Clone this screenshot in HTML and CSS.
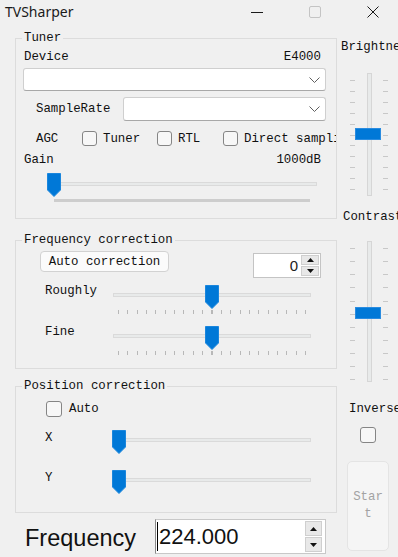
FILE: index.html
```html
<!DOCTYPE html>
<html>
<head>
  <title>TVSharper</title>
  <link rel="stylesheet" href="styles.css">
</head>
<body>
  <div class="window">
    <div class="titlebar">
      <span class="title">TVSharper</span>
      <div class="caption-buttons">
        <span class="caption-btn"><svg width="12" height="12" viewBox="0 0 12 12"><path d="M0 6.5H12" stroke="#1a1a1a" stroke-width="1"/></svg></span>
        <span class="caption-btn"><svg width="12" height="12" viewBox="0 0 12 12"><rect x="0.5" y="0.5" width="11" height="11" rx="1.5" fill="none" stroke="#c4c4c4"/></svg></span>
        <span class="caption-btn"><svg width="12" height="12" viewBox="0 0 12 12"><path d="M0.5 0.5L11.5 11.5M11.5 0.5L0.5 11.5" stroke="#1a1a1a" stroke-width="1"/></svg></span>
      </div>
    </div>

    <div class="client">
      <div class="left">
        <div class="group tuner">
          <span class="legend">Tuner</span>
          <div class="row spread first"><span>Device</span><span class="value">E4000</span></div>
          <div class="combo device"><svg class="chevron" width="11" height="6" viewBox="0 0 11 6"><path d="M0.5 0.5L5.5 5.5L10.5 0.5" fill="none" stroke="#5f5f5f"/></svg></div>
          <div class="row samplerate">
            <span class="samplerate-label">SampleRate</span>
            <div class="combo rate"><svg class="chevron" width="11" height="6" viewBox="0 0 11 6"><path d="M0.5 0.5L5.5 5.5L10.5 0.5" fill="none" stroke="#5f5f5f"/></svg></div>
          </div>
          <div class="row agc">
            <span class="agc-label">AGC</span>
            <label class="check tuner-check"><span class="box"></span>Tuner</label>
            <label class="check rtl-check"><span class="box"></span>RTL</label>
            <label class="check"><span class="box"></span>Direct sampling</label>
          </div>
          <div class="row spread gain"><span>Gain</span><span class="value">1000dB</span></div>
          <div class="hslider gain-slider">
            <div class="track"></div>
            <svg class="thumb" width="14" height="24" viewBox="0 0 14 24"><path d="M0.5 0.5H13.5V17L7 23.5L0.5 17Z" fill="#0078d7" stroke="#1a86dd"/></svg>
          </div>
          <div class="gain-bar"></div>
        </div>

        <div class="group freq">
          <span class="legend">Frequency correction</span>
          <div class="row auto-row">
            <button class="btn auto-btn">Auto correction</button>
            <div class="numeric">
              <span class="numeric-value">0</span>
              <span class="spin small">
                <span class="spin-btn"><svg width="7" height="4" viewBox="0 0 7 4"><path d="M3.5 0L7 4H0Z" fill="#111"/></svg></span>
                <span class="spin-btn"><svg width="7" height="4" viewBox="0 0 7 4"><path d="M0 0H7L3.5 4Z" fill="#111"/></svg></span>
              </span>
            </div>
          </div>
          <div class="row slider-row rough">
            <span class="slider-label">Roughly</span>
            <div class="hslider ticked">
              <div class="track"></div>
              <div class="ticks"></div>
              <svg class="thumb mid" width="14" height="24" viewBox="0 0 14 24"><path d="M0.5 0.5H13.5V17L7 23.5L0.5 17Z" fill="#0078d7" stroke="#1a86dd"/></svg>
            </div>
          </div>
          <div class="row slider-row">
            <span class="slider-label">Fine</span>
            <div class="hslider ticked">
              <div class="track"></div>
              <div class="ticks"></div>
              <svg class="thumb mid" width="14" height="24" viewBox="0 0 14 24"><path d="M0.5 0.5H13.5V17L7 23.5L0.5 17Z" fill="#0078d7" stroke="#1a86dd"/></svg>
            </div>
          </div>
        </div>

        <div class="group position">
          <span class="legend">Position correction</span>
          <label class="check auto-check"><span class="box"></span>Auto</label>
          <div class="row slider-row pos">
            <span class="slider-label pos-label">X</span>
            <div class="hslider pos-slider">
              <div class="track"></div>
              <svg class="thumb" width="14" height="24" viewBox="0 0 14 24"><path d="M0.5 0.5H13.5V17L7 23.5L0.5 17Z" fill="#0078d7" stroke="#1a86dd"/></svg>
            </div>
          </div>
          <div class="row slider-row pos">
            <span class="slider-label pos-label">Y</span>
            <div class="hslider pos-slider">
              <div class="track"></div>
              <svg class="thumb" width="14" height="24" viewBox="0 0 14 24"><path d="M0.5 0.5H13.5V17L7 23.5L0.5 17Z" fill="#0078d7" stroke="#1a86dd"/></svg>
            </div>
          </div>
        </div>

        <div class="freq-row">
          <span class="freq-label">Frequency</span>
          <div class="freq-input">
            <span class="caret"></span><span class="freq-value">224.000</span>
            <span class="spin big">
              <span class="spin-btn"><svg width="7" height="4" viewBox="0 0 7 4"><path d="M3.5 0L7 4H0Z" fill="#111"/></svg></span>
              <span class="spin-btn"><svg width="7" height="4" viewBox="0 0 7 4"><path d="M0 0H7L3.5 4Z" fill="#111"/></svg></span>
            </span>
          </div>
        </div>
      </div>

      <div class="right">
        <div class="side-label">Brightness</div>
        <div class="vslider brightness">
          <div class="vticks"></div>
          <div class="vtrack"></div>
          <div class="vticks right-ticks"></div>
          <div class="vthumb"></div>
        </div>
        <div class="side-label contrast-label">Contrast</div>
        <div class="vslider contrast">
          <div class="vticks"></div>
          <div class="vtrack"></div>
          <div class="vticks right-ticks"></div>
          <div class="vthumb"></div>
        </div>
        <div class="side-label inverse-label">Inverse</div>
        <span class="box inverse-box"></span>
        <div class="start-btn"><span class="start-text">Start</span></div>
      </div>
    </div>
  </div>
</body>
</html>
```

FILE: styles.css
```css
* {
  margin: 0;
  padding: 0;
  box-sizing: border-box;
}

body, html {
  width: 398px;
  height: 557px;
  overflow: hidden;
  background: #f0f0f0;
}

.window {
  width: 398px;
  height: 557px;
  overflow: hidden;
  font-family: 'Liberation Mono', monospace;
  font-size: 12.4px;
  line-height: 14px;
  color: #111;
}

/* title bar */
.titlebar {
  height: 30px;
  display: flex;
  align-items: center;
}

.title {
  font-family: 'Noto Sans', sans-serif;
  font-size: 14px;
  color: #1a1a1a;
  padding-left: 5px;
  margin-top: -6px;
}

.caption-buttons {
  margin-left: auto;
  margin-right: -4px;
  display: flex;
  margin-top: -6px;
}

.caption-btn {
  width: 58px;
  display: flex;
  justify-content: center;
}

/* main area */
.client {
  display: grid;
  grid-template-columns: 326px 1fr;
  padding-left: 15px;
}

.group {
  position: relative;
  width: 322px;
  border: 1px solid #dcdcdc;
  padding: 0 10px 0 7px;
}

.legend {
  position: absolute;
  top: -8px;
  left: 6px;
  padding: 0 2px 0 2px;
  background: #f0f0f0;
}

.tuner {
  margin-top: 8px;
  height: 181px;
}

.freq {
  margin-top: 21px;
  height: 129px;
}

.position {
  margin-top: 17px;
  height: 127px;
}

.row {
  display: flex;
  align-items: center;
}

.spread {
  justify-content: space-between;
  padding-left: 1px;
}

.spread .value {
  padding-right: 5px;
}

.first {
  margin-top: 11px;
}

.combo {
  position: relative;
  background: #fff;
  border: 1px solid #cfcfcf;
  border-bottom-color: #a8a8a8;
  border-radius: 3px;
}

.chevron {
  position: absolute;
  right: 5px;
  top: 8px;
}

.device {
  margin-top: 4px;
  height: 23px;
}

.samplerate {
  margin-top: 6px;
  padding-left: 13px;
}

.samplerate-label {
  width: 87px;
}

.rate {
  flex: 1;
  height: 24px;
}

.agc {
  margin-top: 10px;
  margin-right: -10px;
  padding-left: 13px;
  height: 15px;
  overflow: hidden;
  white-space: nowrap;
}

.agc-label {
  width: 46px;
  flex: none;
}

.check {
  display: flex;
  align-items: center;
  flex: none;
}

.box {
  display: inline-block;
  width: 15px;
  height: 15px;
  border: 1px solid #858585;
  border-radius: 3px;
  background: #f7f7f7;
  margin-right: 6px;
}

.tuner-check {
  width: 75px;
}

.rtl-check {
  width: 66px;
}

.gain {
  margin-top: 7px;
}

/* horizontal trackbars */
.hslider {
  position: relative;
  height: 24px;
}

.track {
  position: absolute;
  top: 8px;
  height: 4px;
  left: 0;
  right: 0;
  background: #e8eaea;
  border: 1px solid #dadada;
}

.thumb {
  position: absolute;
  top: 0;
  left: 0;
  display: block;
}

.gain-slider {
  margin-top: 6px;
  margin-left: 24px;
  width: 270px;
}

.gain-slider .track {
  left: 6px;
  top: 9px;
}

.gain-bar {
  margin-top: 2px;
  margin-left: 31px;
  width: 256px;
  height: 3px;
  background: #cdcdcd;
}

.auto-row {
  margin-top: 10px;
  align-items: flex-start;
  justify-content: space-between;
  padding-right: 5px;
}

.btn {
  font-family: 'Liberation Mono', monospace;
  font-size: 12.4px;
  color: #111;
  background: #fbfbfb;
  border: 1px solid #d2d2d2;
  border-radius: 4px;
}

.auto-btn {
  margin-left: 17px;
  width: 129px;
  height: 21px;
}

.numeric {
  margin-top: 2px;
  width: 68px;
  height: 25px;
  background: #fff;
  border: 1px solid #c4c4c4;
  display: flex;
  align-items: center;
  justify-content: flex-end;
}

.numeric-value {
  font-family: 'Liberation Sans', sans-serif;
  font-size: 15px;
  color: #222;
  margin-right: 3px;
}

.spin {
  display: flex;
  flex-direction: column;
  gap: 1px;
}

.spin-btn {
  display: flex;
  align-items: center;
  justify-content: center;
  background: #e8e8e8;
  border: 1px solid #cfcfcf;
}

.small .spin-btn {
  width: 18px;
  height: 10px;
}

.small {
  margin-right: 1px;
}

.slider-row {
  align-items: flex-start;
  padding-left: 22px;
  height: 41px;
}

.rough {
  margin-top: 7px;
}

.slider-label {
  width: 68px;
  margin-top: -1px;
  flex: none;
}

.ticked {
  width: 198px;
}

.ticks {
  position: absolute;
  top: 25px;
  left: 5px;
  width: 189px;
  height: 4px;
  background: repeating-linear-gradient(to right, #b8b8b8 0 1px, transparent 1px 9.35px);
}

.thumb.mid {
  left: 92px;
}

.auto-check {
  margin-top: 14px;
  margin-left: 23px;
}

.auto-check .box {
  width: 16px;
  height: 16px;
  margin-right: 7px;
}

.pos {
  margin-top: 13px;
  height: 27px;
}

.pos + .pos {
  margin-top: 13px;
}

.pos-label {
  width: 67px;
  margin-top: 1px;
}

.pos-slider {
  width: 199px;
}

.pos-slider .track {
  left: 6px;
}

/* frequency entry */
.freq-row {
  margin-top: 6px;
  display: flex;
  align-items: center;
  padding-left: 10px;
}

.freq-label {
  width: 130px;
  font-family: 'Liberation Sans', sans-serif;
  font-size: 23.5px;
  line-height: 30px;
  color: #111;
  margin-top: 2px;
}

.freq-input {
  width: 171px;
  height: 35px;
  background: #fff;
  border: 1px solid #c8c8c8;
  border-left-color: #8a8a8a;
  display: flex;
  align-items: center;
  padding-left: 1px;
}

.caret {
  width: 1px;
  height: 29px;
  background: #000;
  margin-right: 1px;
}

.freq-value {
  font-family: 'Liberation Sans', sans-serif;
  font-size: 22px;
  color: #111;
  flex: 1;
}

.big {
  margin-right: 3px;
}

.big .spin-btn {
  width: 17px;
  height: 15px;
}

/* right column */
.right {
  padding-top: 10px;
  white-space: nowrap;
  display: flex;
  flex-direction: column;
  align-items: flex-start;
}

.vslider {
  position: relative;
  margin-top: 19px;
  margin-left: 7px;
  width: 42px;
  height: 123px;
}

.vtrack {
  position: absolute;
  left: 19px;
  top: 0;
  bottom: 0;
  width: 5px;
  background: #e8eaea;
  border: 1px solid #d6d6d6;
}

.vticks {
  position: absolute;
  left: 2px;
  top: 7px;
  width: 5px;
  height: 111px;
  background: repeating-linear-gradient(to bottom, #c8c8c8 0 1px, transparent 1px 10.9px);
}

.right-ticks {
  left: 35px;
}

.vthumb {
  position: absolute;
  left: 7px;
  top: 55px;
  width: 26px;
  height: 12px;
  background: #0078d7;
  border: 1px solid #2a8ce0;
}

.contrast-label {
  margin-top: 14px;
  padding-left: 2px;
}

.contrast {
  margin-top: 17px;
  height: 141px;
}

.contrast .vticks {
  height: 133px;
  background:
    linear-gradient(#c8c8c8, #c8c8c8) 0 131px / 5px 1px no-repeat,
    repeating-linear-gradient(to bottom, #c8c8c8 0 1px, transparent 1px 13.15px);
}

.contrast .vthumb {
  top: 66px;
}

.inverse-label {
  margin-top: 20px;
  padding-left: 8px;
}

.inverse-box {
  margin-top: 11px;
  margin-left: 19px;
  width: 16px;
  height: 16px;
}

.start-btn {
  margin-top: 18px;
  margin-left: 6px;
  width: 42px;
  height: 90px;
  display: flex;
  align-items: center;
  justify-content: center;
  background: #f5f5f5;
  border: 1px solid #e4e4e4;
  border-radius: 5px;
}

.start-text {
  width: 31px;
  white-space: normal;
  word-break: break-all;
  text-align: center;
  line-height: 17px;
  color: #a3a3a3;
}
```
